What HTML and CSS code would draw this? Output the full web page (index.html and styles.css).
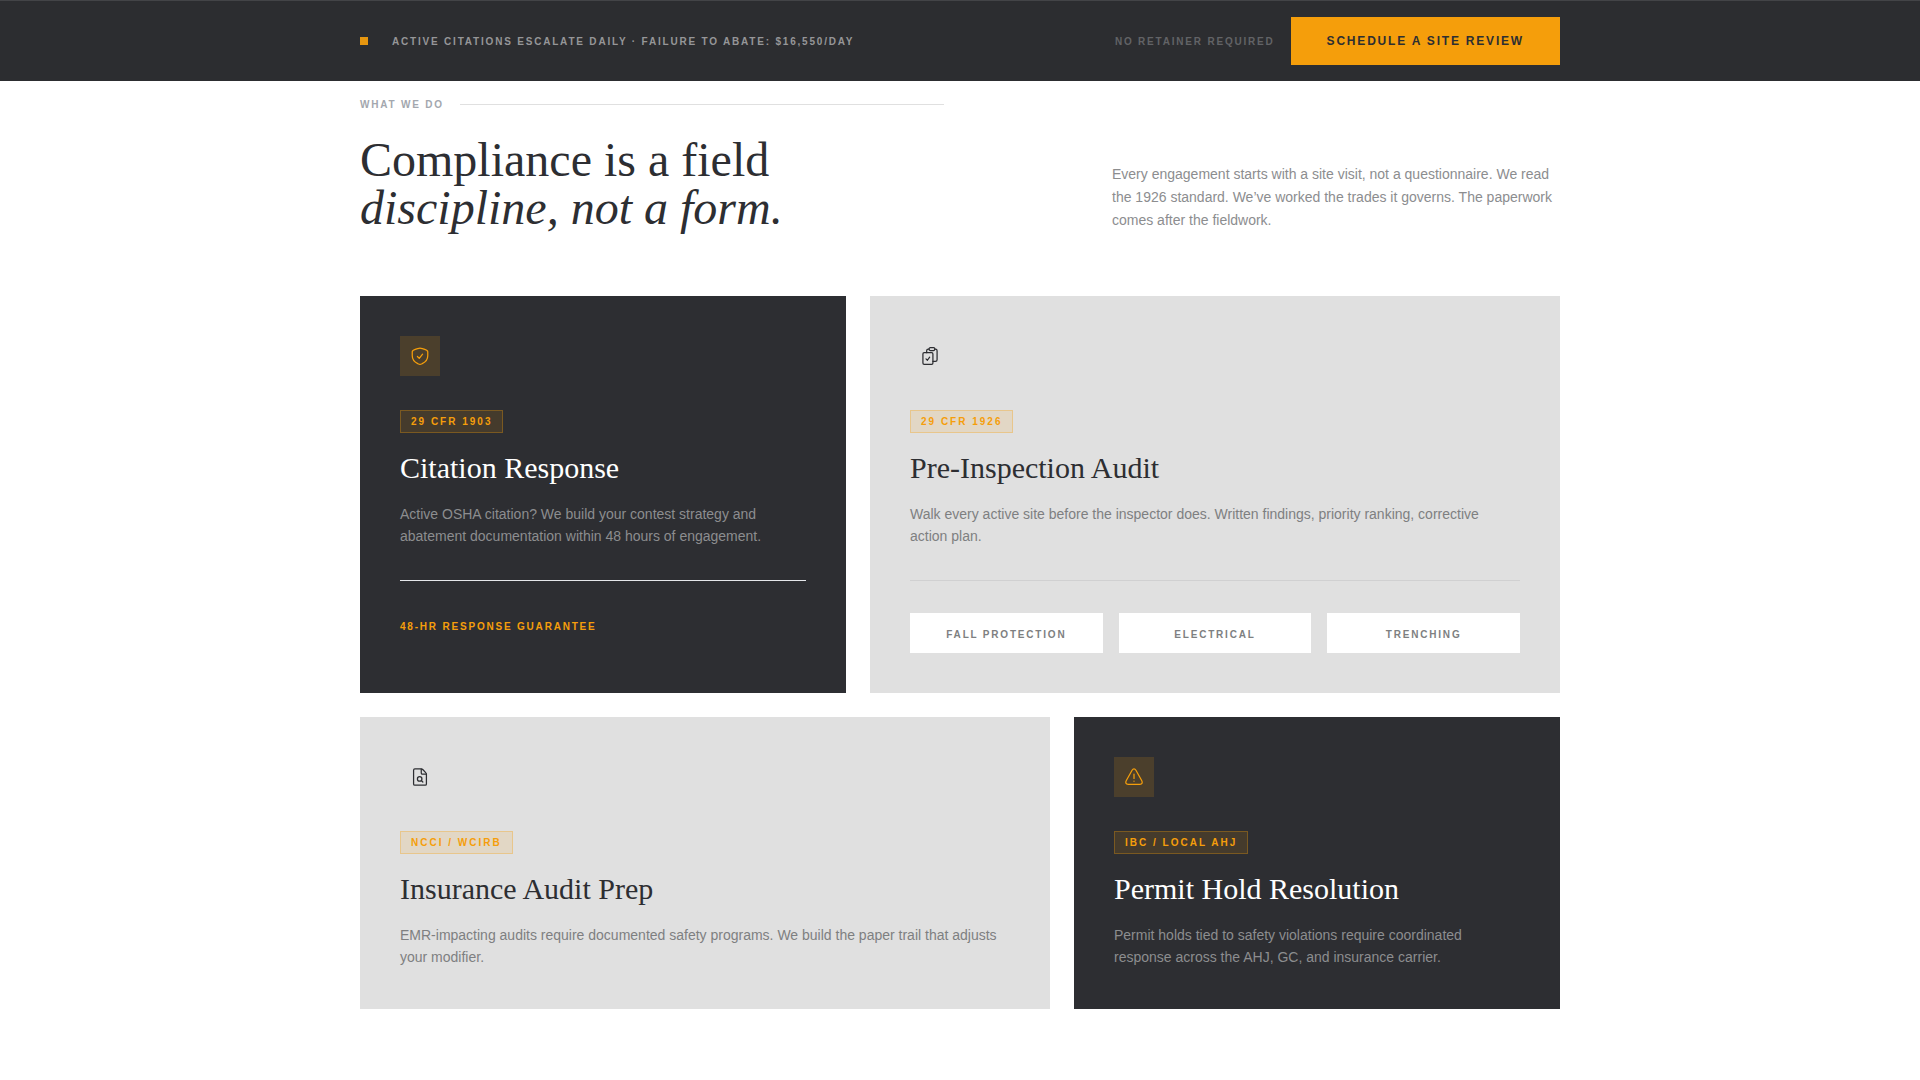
FILE: index.html
```html
<!DOCTYPE html>
<html lang="en">
<head>
  <meta charset="UTF-8" />
  <meta name="viewport" content="width=device-width, initial-scale=1" />
  <title>What We Do</title>
  <link rel="stylesheet" href="styles.css">
</head>
<body>
  <header class="topbar">
    <div class="container topbar-inner">
      <p class="alert"><span class="alert-dot"></span>Active citations escalate daily · Failure to abate: $16,550/day</p>
      <div class="topbar-cta">
        <span class="note">No retainer required</span>
        <button type="button" class="btn">Schedule a site review</button>
      </div>
    </div>
  </header>

  <main class="container services">
    <div class="intro">
      <div>
        <p class="eyebrow">What we do</p>
        <h1>Compliance is a field <em>discipline, not a form.</em></h1>
      </div>
      <p class="intro-text">Every engagement starts with a site visit, not a questionnaire. We read the 1926 standard. We’ve worked the trades it governs. The paperwork comes after the fieldwork.</p>
    </div>

    <div class="cards">
      <article class="card dark">
        <div class="icon">
          <svg viewBox="0 0 24 24"><path d="M12 2.400c-1.200 0-2.400.6-4.600 1.300C4.400 4.700 2.700 5.200 2.700 7v4.800c0 5.500 4 8.200 6.600 9.400.9.400 1.700.8 2.700.8s1.800-.4 2.700-.8c2.600-1.200 6.600-3.900 6.600-9.400V7c0-1.800-1.700-2.300-4.700-3.300-2.200-.7-3.400-1.300-4.600-1.300z"/><path d="M8.900 12.600l2.200 2.200 4-5"/></svg>
        </div>
        <span class="tag">29 CFR 1903</span>
        <h2>Citation Response</h2>
        <p>Active OSHA citation? We build your contest strategy and abatement documentation within 48 hours of engagement.</p>
        <div class="card-foot guarantee">48-hr response guarantee</div>
      </article>

      <article class="card wide">
        <div class="icon">
          <svg viewBox="0 0 24 24"><rect x="3.500" y="8" width="12" height="14" rx="1.500"/><path d="M7.200 15.500l1.700 1.600 2.700-3.700"/><path d="M8 8V5.600c0-1.300.7-2 2-2h.9M15.500 18.500h3c1.300 0 2-.7 2-2V5.600c0-1.300-.7-2-2-2h-.7"/><path d="M12.300 2h4c.8 0 1.500.8 1.500 1.700s-.7 1.700-1.500 1.700h-4c-.8 0-1.500-.8-1.500-1.700S11.500 2 12.300 2z"/></svg>
        </div>
        <span class="tag">29 CFR 1926</span>
        <h2>Pre-Inspection Audit</h2>
        <p>Walk every active site before the inspector does. Written findings, priority ranking, corrective action plan.</p>
        <ul class="card-foot chips">
          <li>Fall protection</li>
          <li>Electrical</li>
          <li>Trenching</li>
        </ul>
      </article>

      <article class="card wide">
        <div class="icon">
          <svg viewBox="0 0 24 24"><path d="M13.500 2.300H5.800c-1 0-1.500.5-1.500 1.500v16.500c0 1 .5 1.500 1.500 1.500h12.400c1 0 1.500-.5 1.500-1.500V8.800c0-.8-.3-1.400-.9-2L15.600 3.300c-.6-.6-1.300-1-2.100-1z"/><path d="M13.500 2.500v4.600c0 1 .5 1.500 1.500 1.500h4.500"/><circle cx="11.600" cy="14.300" r="2.700"/><path d="M13.700 16.300l1.700 1.700"/></svg>
        </div>
        <span class="tag">NCCI / WCIRB</span>
        <h2>Insurance Audit Prep</h2>
        <p>EMR-impacting audits require documented safety programs. We build the paper trail that adjusts your modifier.</p>
      </article>

      <article class="card dark">
        <div class="icon">
          <svg viewBox="0 0 24 24"><path d="M9.700 3.900C10.300 2.900 11 2.300 12 2.300s1.700.6 2.300 1.600l6.900 12.300c1.400 2.500.6 4.500-2.200 4.500H5c-2.800 0-3.600-2-2.200-4.500z"/><path d="M12 8.500v5.200M12 16.800v.3"/></svg>
        </div>
        <span class="tag">IBC / Local AHJ</span>
        <h2>Permit Hold Resolution</h2>
        <p>Permit holds tied to safety violations require coordinated response across the AHJ, GC, and insurance carrier.</p>
      </article>
    </div>
  </main>
</body>
</html>
```
FILE: styles.css
```css
*, *::before, *::after { box-sizing: border-box; margin: 0; padding: 0; }

:root {
  --ink: #2d2e32;
  --amber: #f59e0b;
  --stone: #e0e0e0;
  --muted: #8c8d8f;
}

body { font-family: "Liberation Sans", Arial, sans-serif; font-size: 14px; line-height: 22px; color: var(--ink); background: #fff; }
.container { width: 100%; max-width: 1248px; margin: 0 auto; padding: 0 24px; }

/* top bar */
.topbar { background: #2c2d30; border-top: 1px solid #434447; padding: 16px 0; }
.topbar-inner, .topbar-cta, .alert { display: flex; align-items: center; }
.topbar-inner { justify-content: space-between; gap: 24px; }
.topbar-cta { gap: 16px; }
.alert { gap: 24px; color: #969698; }
.alert-dot { flex: none; width: 8px; height: 8px; background: #e6960f; }
.note { color: #626366; }

.alert, .note, .eyebrow, .tag, .guarantee, .chips { font-size: 10px; font-weight: 700; line-height: 15px; letter-spacing: 0.18em; text-transform: uppercase; }

.btn {
  height: 48px;
  padding: 0 36px;
  border: none;
  background: var(--amber);
  color: var(--ink);
  font: 700 12px/16px "Liberation Sans", Arial, sans-serif;
  letter-spacing: 0.15em;
  text-transform: uppercase;
  cursor: pointer;
}
.btn:hover { background: #d97706; }

/* intro */
.services { padding-top: 16px; padding-bottom: 64px; }
.intro { display: grid; grid-template-columns: 1fr 1fr; gap: 32px; align-items: end; margin-bottom: 64px; }
.eyebrow { display: flex; align-items: center; gap: 16px; margin-bottom: 24px; color: #a3a7ae; }
.eyebrow::after { content: ""; flex: 1; height: 1px; background: var(--stone); }
h1, h2 { font-family: "Liberation Serif", "Times New Roman", serif; font-weight: 400; }
h1 { font-size: 48px; line-height: 48px; }
h1 em { display: block; }
.intro-text { justify-self: end; max-width: 448px; line-height: 23px; color: var(--muted); }

/* service cards */
.cards { display: grid; grid-template-columns: repeat(12, 1fr); gap: 24px; }
.card { grid-column: span 5; padding: 40px; background: var(--stone); }
.card.wide { grid-column: span 7; }
.card p { padding-bottom: 1px; color: #7e7f81; }
.icon { display: flex; align-items: center; justify-content: center; width: 40px; height: 40px; margin-bottom: 34px; }
.icon svg { width: 20px; height: 20px; fill: none; stroke: currentColor; stroke-width: 1.5; stroke-linecap: round; stroke-linejoin: round; }
.tag { display: block; width: fit-content; margin-bottom: 17px; padding: 3px 10px; border: 1px solid rgba(245, 158, 11, 0.3); background: rgba(245, 158, 11, 0.12); color: var(--amber); letter-spacing: 0.2em; }
h2 { margin-bottom: 17px; font-size: 30px; line-height: 36px; }
.card-foot { margin-top: 32px; padding-top: 32px; border-top: 1px solid #d0d0d1; }

.dark { background: var(--ink); color: #fff; }
.card.dark p { color: var(--muted); }
.dark .icon { background: rgba(245, 158, 11, 0.15); color: var(--amber); }
.dark .card-foot { border-color: #e5e7eb; }

.guarantee { color: var(--amber); line-height: 27px; }
.chips { display: grid; grid-template-columns: repeat(3, 1fr); gap: 16px; list-style: none; }
.chips li { padding: 14px 8px 10px; background: #fff; color: #7e7f81; line-height: 16px; text-align: center; }

@media (max-width: 900px) {
  .topbar-inner { flex-direction: column; }
  .intro { grid-template-columns: 1fr; }
  .intro-text { justify-self: start; }
  .card, .card.wide { grid-column: 1 / -1; }
}
```
